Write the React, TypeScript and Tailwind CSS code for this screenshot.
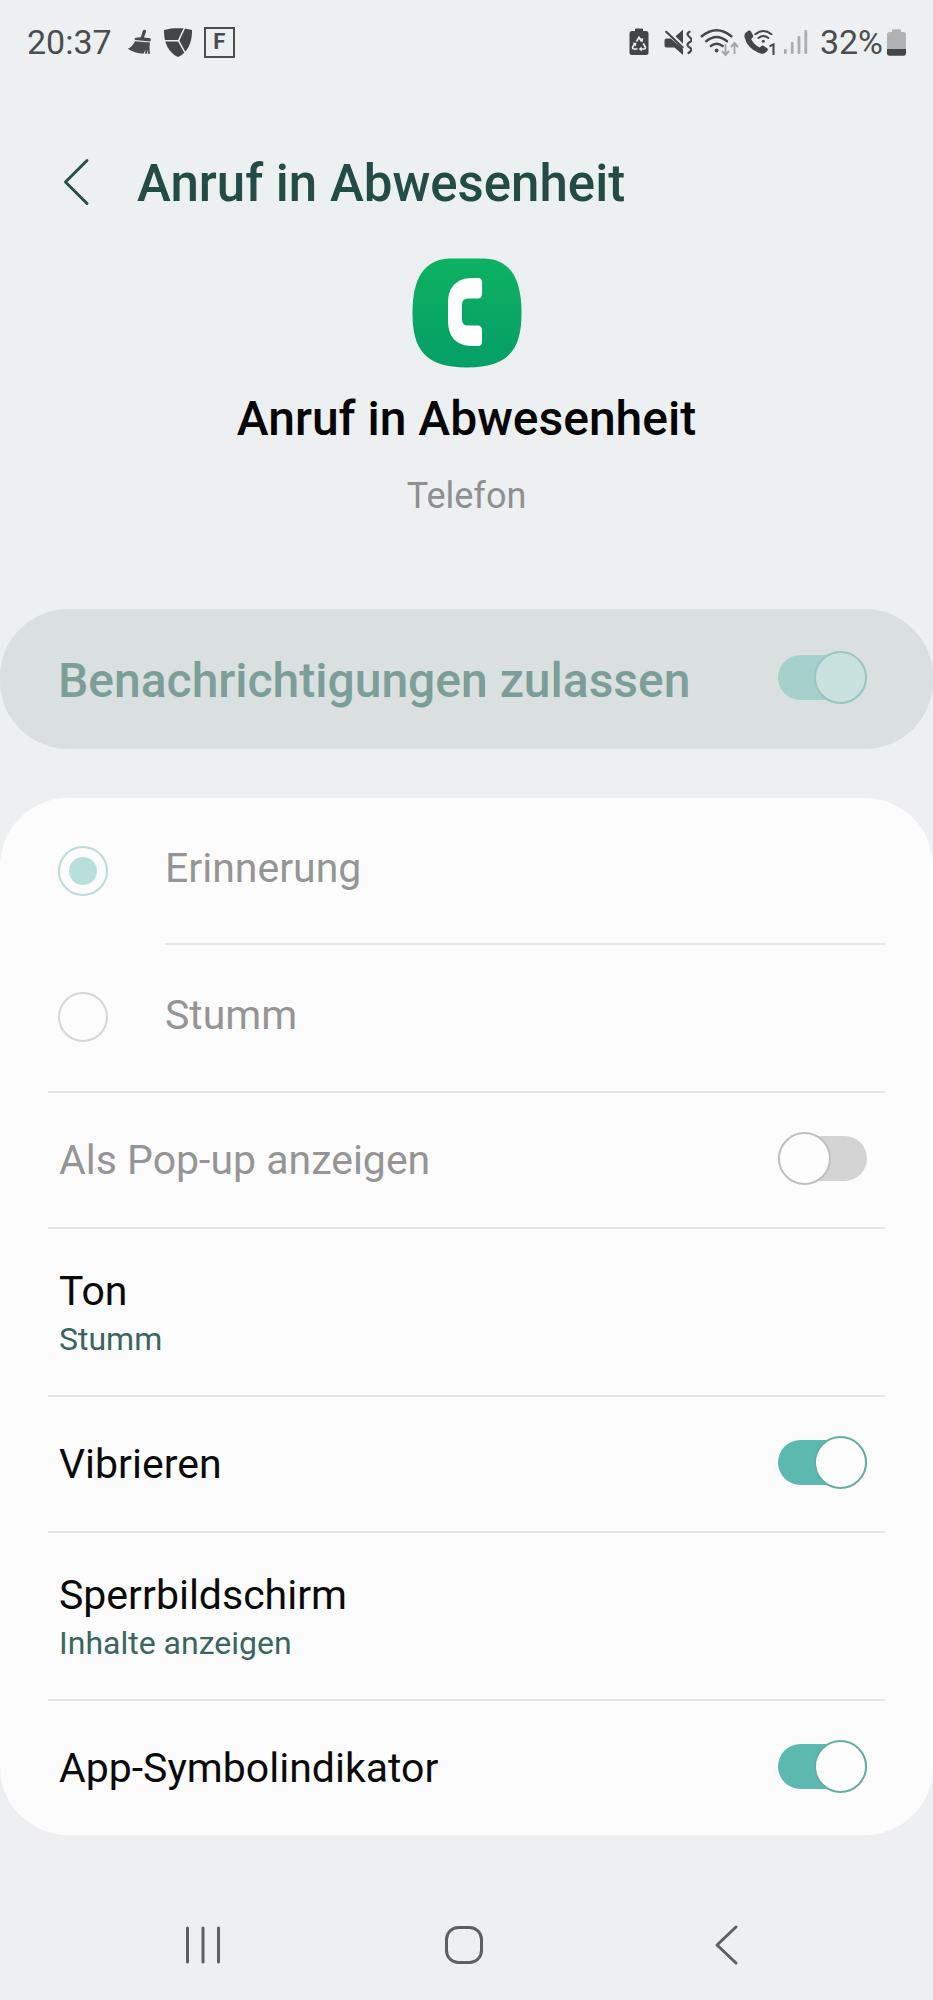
import { clsx } from "clsx";
import type { ReactNode } from "react";

const ALERT_OPTIONS = [
  { id: "erinnerung", label: "Erinnerung", checked: true },
  { id: "stumm", label: "Stumm", checked: false },
];

function BroomIcon() {
  return (
    <svg width="25" height="26" viewBox="0 0 25 26" fill="#4a4d4d">
      <path d="M16 1.6c.4-1.3 3.4-.8 3.1.9L17 8.500l6 .8c1.200.2 1 3.200-.3 3.300L8.200 10.900c-1-.2-.7-2 .5-2.200l5-.4z" />
      <path d="M8 12.200 23 13.400c-.6 4-.5 7 .1 11.400h-2.300l.5-4-1.700 4h-1.700l.8-4-2.300 4C10.500 24.800 5 22.500.8 19.800 4 18.200 6.500 15.500 8 12.200z" />
    </svg>
  );
}

function ShieldIcon() {
  return (
    <svg width="28" height="29" viewBox="0 0 28 29">
      <path
        d="M0 2C5 .5 9 .2 14 .2S23 .5 28 2c.3 11-3.500 22-14 27C3.500 24-.3 13 0 2z"
        fill="#434646"
      />
      <path
        d="M0 12.700h14.600M20.500 0l-6 12.700L21 24.500"
        fill="none"
        stroke="#ecf0f1"
        strokeWidth="1.500"
      />
    </svg>
  );
}

function BatterySaverIcon() {
  return (
    <svg width="20" height="28" viewBox="0 0 20 28">
      <path
        d="M6 3V1.500Q6 .5 7 .5h6q1 0 1 1V3h3q2.500 0 2.500 2.500v19Q19.500 27 17 27H3Q.5 27 .5 24.500v-19Q.5 3 3 3z"
        fill="#434646"
      />
      <path
        d="M7.400 13.500 10 9.300l2.600 4.200M14.300 15.500l1.900 3.300q.8 2-1.400 2.200H12M8.500 21H5.200q-2.200-.2-1.400-2.200l2-3.300"
        fill="none"
        stroke="#ecf0f1"
        strokeWidth="1.700"
      />
      <path d="m10.500 10.500 3.800 0-.8 3.900zM12.800 18.500v5l-3-2.500zM3.800 14.600l3.700.5-.8 3.300z" fill="#ecf0f1" />
    </svg>
  );
}

function MuteIcon() {
  return (
    <svg width="28" height="27" viewBox="0 0 28 27" fill="#434646">
      <path d="M2.500 9.500h4.200L19 19.800V26l-8.500-7.500h-8Q.5 18.500.5 16.500v-5q0-2 2-2zM11.500 7.300 19 .8v14z" />
      <path
        d="m2.200 2.800 16.300 15.400M25.500 2.800q-4 2 0 5.200t0 5.200q-4 3 0 5.200t-1 5.600"
        fill="none"
        stroke="#434646"
        strokeWidth="2.200"
        strokeLinecap="round"
      />
    </svg>
  );
}

function WifiIcon() {
  return (
    <svg width="40" height="29" viewBox="0 0 40 29" fill="none">
      <g stroke="#434646" strokeWidth="2.400" strokeLinecap="round">
        <path d="M1.800 8.300q14.700-12 29.600 0" />
        <path d="M6.200 13.200q10.400-8.500 20.800 0" />
        <path d="M10.800 18q5.900-4.700 11.800 0" />
      </g>
      <circle cx="16.600" cy="22.500" r="1.900" fill="#434646" />
      <g stroke="#a3a6a6" strokeWidth="1.900">
        <path d="M25.500 16v10.500M22 23l3.500 4 3.500-4M34.500 26V15.500M31 19l3.500-4 3.500 4" />
      </g>
    </svg>
  );
}

function WifiCallIcon() {
  return (
    <svg width="32" height="27" viewBox="0 0 32 27" fill="none">
      <path
        d="M1.300 4 4.500 1.600q1.500-.6 2.500 1l2 3.600q.6 1.500-.6 2.600l-1.200 1.200q3 6 8.500 8.500l1.600-1.400q1.200-1 2.600-.2l3.300 2.300q1.300 1.200.3 2.500l-2.500 2.300q-2.500 1.300-6 0Q3.500 19.500.6 8.500.1 5.500 1.300 4z"
        fill="#434646"
      />
      <g stroke="#434646" strokeWidth="2" strokeLinecap="round">
        <path d="M11.300 5.200q8-6.400 16.200 0" />
        <path d="M14.400 9q5-4 10 0" />
      </g>
      <circle cx="19.300" cy="12.300" r="1.500" fill="#434646" />
      <path d="M25.500 17.300 29.500 15.300V26" stroke="#434646" strokeWidth="2" />
    </svg>
  );
}

function SignalIcon() {
  return (
    <svg width="24" height="26" viewBox="0 0 24 26" fill="#abaeae">
      <rect x="0" y="20" width="2.800" height="5" rx="1" />
      <rect x="6.800" y="13" width="2.800" height="12" rx="1" />
      <rect x="13.600" y="7" width="2.800" height="18" rx="1" />
      <rect x="20.400" y="1" width="2.800" height="24" rx="1" />
    </svg>
  );
}

function BatteryIcon() {
  return (
    <svg width="19" height="27" viewBox="0 0 19 27">
      <path
        d="M5 3V1.500Q5 .3 6.200.3h6.600Q14 .3 14 1.500V3h2.500Q19 3 19 5.500V20H0V5.500Q0 3 2.500 3z"
        fill="#b0b3b3"
      />
      <path d="M0 20h19v4.500q0 2.300-2.500 2.300h-14Q0 26.800 0 24.500z" fill="#434646" />
    </svg>
  );
}

function PhoneAppIcon() {
  return (
    <svg width="110" height="110" viewBox="0 0 110 110">
      <defs>
        <linearGradient id="phone-bg" x1="0" y1="0" x2="0" y2="1">
          <stop offset="0" stopColor="#0eb162" />
          <stop offset="1" stopColor="#049f66" />
        </linearGradient>
      </defs>
      <path
        d="M37 .5H73C98 2 109.500 20 109.500 55S98 109.500 55 109.500.5 90 .5 55 12 2 37 .5z"
        fill="url(#phone-bg)"
      />
      <path
        d="M58 20h8q4 0 4 4v12q0 4.500-4.500 4.500H56q-6 0-6 6v15q0 6 6 6h9.500q4.500 0 4.500 4.500v12q0 4-4 4h-8Q36 86 36 63V45q0-23 22-25z"
        fill="#fff"
      />
    </svg>
  );
}

type SwitchProps = {
  id: string;
  checked?: boolean;
  disabled?: boolean;
};

function Switch({ id, checked, disabled }: SwitchProps) {
  return (
    <input
      id={id}
      type="checkbox"
      role="switch"
      defaultChecked={checked}
      disabled={disabled}
      className={clsx(
        "relative mb-1 h-[45px] w-[89px] shrink-0 appearance-none rounded-full bg-[#d4d4d4] checked:bg-[#5cb9b0] disabled:checked:bg-[#a6d0cc]",
        "before:absolute before:-top-1 before:left-0 before:size-[53px] before:rounded-full before:border-2 before:border-[#bfbfbf] before:bg-[#fdfdfd]",
        "checked:before:left-9 checked:before:border-[#63ada5] disabled:checked:before:border-[#9ac5c0] disabled:checked:before:bg-[#c9e1de]",
      )}
    />
  );
}

type RowProps = {
  children: ReactNode;
  last?: boolean;
};

function Row({ children, last }: RowProps) {
  return (
    <div
      className={clsx(
        "mx-12 flex items-center justify-between border-[#e6e6e6] pr-[18px] pl-[11px]",
        !last && "border-b-2",
      )}
    >
      {children}
    </div>
  );
}

type LinkRowProps = {
  title: string;
  value: string;
};

function LinkRow({ title, value }: LinkRowProps) {
  return (
    <Row>
      <a href="#" className="flex grow flex-col gap-[2px] pt-[38px] pb-[34px]">
        <span className="text-[41px] leading-[48px] text-[#0a0a0a]">{title}</span>
        <span className="text-[32px] leading-[44px] text-[#39665f]">{value}</span>
      </a>
    </Row>
  );
}

export default function App() {
  return (
    <div className="flex min-h-dvh flex-col bg-[#ecf0f1] font-[Roboto,sans-serif]">
      <div className="flex h-[84px] items-center justify-between pr-[27px] pl-[27px] text-[34px] text-[#4a4d4d]">
        <div className="flex items-center">
          <span>20:37</span>
          <div className="ml-[15px] flex items-center gap-3">
            <BroomIcon />
            <ShieldIcon />
            <span className="flex size-[31px] items-center justify-center border-2 text-[22px] leading-none font-bold">
              F
            </span>
          </div>
        </div>
        <div className="flex items-center">
          <div className="flex items-center gap-[15px]">
            <BatterySaverIcon />
            <MuteIcon />
          </div>
          <div className="ml-2 flex items-center gap-1">
            <WifiIcon />
            <WifiCallIcon />
          </div>
          <div className="ml-2 flex items-center gap-3">
            <SignalIcon />
            <span>32%</span>
          </div>
          <div className="ml-1">
            <BatteryIcon />
          </div>
        </div>
      </div>

      <header className="mt-16 flex h-[70px] items-center gap-[47px] pl-[62px]">
        <button type="button" aria-label="Zurück" className="pb-[2px]">
          <svg width="28" height="48" viewBox="0 0 28 48" fill="none">
            <path
              d="M25 2.500 3.500 24 25 45.500"
              stroke="#2a4f49"
              strokeWidth="3"
              strokeLinecap="round"
              strokeLinejoin="round"
            />
          </svg>
        </button>
        <h1 className="pt-[2px] text-[51px] font-medium text-[#234c46]">Anruf in Abwesenheit</h1>
      </header>

      <section className="mt-10 flex flex-col items-center">
        <PhoneAppIcon />
        <h2 className="mt-[21px] text-[48px] leading-[60px] font-medium text-[#050505]">
          Anruf in Abwesenheit
        </h2>
        <p className="mt-[23px] text-[36px] leading-[48px] text-[#8e9090]">Telefon</p>
      </section>

      <main className="mt-[89px] flex flex-col gap-[49px]">
        <div className="flex h-[140px] items-center justify-between rounded-[68px] bg-[#dadfdf] pr-[66px] pl-[58px]">
          <label htmlFor="allow" className="pt-1 text-[48px] font-medium text-[#7c9e99]">
            Benachrichtigungen zulassen
          </label>
          <Switch id="allow" checked disabled />
        </div>

        <div className="rounded-[68px] bg-[#fcfcfc]">
          <fieldset disabled>
            {ALERT_OPTIONS.map((option, index) => (
              <div key={option.id} className="flex items-center pr-12 pl-[58px]">
                <input
                  id={option.id}
                  type="radio"
                  name="alert"
                  defaultChecked={option.checked}
                  className="mb-[2px] flex size-[50px] shrink-0 appearance-none items-center justify-center rounded-full border-2 border-[#d6d6d6] checked:border-[#bcdcd8] checked:before:size-7 checked:before:rounded-full checked:before:bg-[#b9dfdb]"
                />
                <label
                  htmlFor={option.id}
                  className={clsx(
                    "ml-[57px] grow border-[#e6e6e6] pt-[46px] pb-[51px] text-[41px] leading-[48px] text-[#959595]",
                    index === 0 && "border-b-2",
                  )}
                >
                  {option.label}
                </label>
              </div>
            ))}
          </fieldset>
          <div className="mx-12 mt-px border-t-2 border-[#e6e6e6]" />
          <Row>
            <label htmlFor="popup" className="py-[43px] text-[41px] leading-[48px] text-[#959595]">
              Als Pop-up anzeigen
            </label>
            <Switch id="popup" disabled />
          </Row>
          <LinkRow title="Ton" value="Stumm" />
          <Row>
            <label htmlFor="vibrate" className="py-[43px] text-[41px] leading-[48px] text-[#0a0a0a]">
              Vibrieren
            </label>
            <Switch id="vibrate" checked />
          </Row>
          <LinkRow title="Sperrbildschirm" value="Inhalte anzeigen" />
          <Row last>
            <label htmlFor="badge" className="py-[43px] text-[41px] leading-[48px] text-[#0a0a0a]">
              App-Symbolindikator
            </label>
            <Switch id="badge" checked />
          </Row>
        </div>
      </main>

      <nav className="mt-auto grid grid-cols-3 justify-items-center pt-8 pr-19 pb-8 pl-18">
        <button type="button" aria-label="Letzte Apps">
          <svg width="46" height="46" viewBox="0 0 46 46" stroke="#5d6060" strokeWidth="3" strokeLinecap="round">
            <path d="M7.500 6v34M23 6v34M38.500 6v34" />
          </svg>
        </button>
        <button type="button" aria-label="Startseite">
          <svg width="46" height="46" viewBox="0 0 46 46" fill="none" stroke="#5d6060" strokeWidth="3">
            <rect x="5.500" y="5.500" width="35" height="35" rx="12" />
          </svg>
        </button>
        <button type="button" aria-label="Zurück">
          <svg
            width="46"
            height="46"
            viewBox="0 0 46 46"
            fill="none"
            stroke="#5d6060"
            strokeWidth="3"
            strokeLinecap="round"
            strokeLinejoin="round"
          >
            <path d="M33 5 14 23 33 41" />
          </svg>
        </button>
      </nav>
    </div>
  );
}
